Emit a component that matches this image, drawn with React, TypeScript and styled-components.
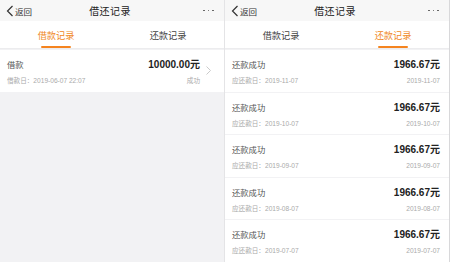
import React from "react";
import styled, { createGlobalStyle } from "styled-components";

const GlobalStyle = createGlobalStyle`
  html, body {
    margin: 0;
    padding: 0;
    background: #f2f2f4;
  }
  body {
    font-family: "Liberation Sans", "Noto Sans CJK SC", sans-serif;
  }
`;

const Page = styled.div`
  display: flex;
  width: 450px;
  height: 262px;
  overflow: hidden;
  gap: 1px;
  background: #e4e4e6;
`;

const Screen = styled.div<{ $edge?: boolean }>`
  display: flex;
  flex-direction: column;
  width: 224px;
  background: #f2f2f4;
  border-right: ${(p) => (p.$edge ? "1px solid #d8d8da" : "none")};
`;

const NavBar = styled.div`
  display: grid;
  grid-template-columns: 1fr auto 1fr;
  align-items: center;
  height: 21px;
  padding: 0 10px 0 6px;
  background: #f7f7f7;
`;

const Back = styled.div`
  display: flex;
  align-items: center;
  gap: 1px;
  font-size: 8.5px;
  color: #333;
`;

const Title = styled.div`
  font-size: 10px;
  color: #222;
  letter-spacing: 0.4px;
`;

const More = styled.div`
  justify-self: end;
  display: flex;
  gap: 3px;
`;

const Dot = styled.span`
  width: 1.6px;
  height: 1.6px;
  border-radius: 50%;
  background: #555;
`;

const Tabs = styled.div`
  display: flex;
  height: 27px;
  background: #fff;
  border-bottom: 1px solid #ececee;
`;

const Tab = styled.div<{ $active?: boolean }>`
  position: relative;
  flex: 1;
  display: flex;
  align-items: center;
  justify-content: center;
  font-size: 9.2px;
  color: ${(p) => (p.$active ? "#f0891e" : "#444")};
  &::after {
    content: "";
    display: ${(p) => (p.$active ? "block" : "none")};
    position: absolute;
    bottom: 0;
    left: 50%;
    width: 30px;
    height: 2px;
    margin-left: -15px;
    border-radius: 1px;
    background: #f5841f;
  }
`;

const List = styled.div`
  display: flex;
  flex-direction: column;
  gap: 1px;
  margin-top: 1px;
`;

const Row = styled.div`
  display: flex;
  align-items: center;
  height: 41.5px;
  padding: 0 9px 0 7px;
  background: #fff;
`;

const Info = styled.div`
  flex: 1;
  display: flex;
  flex-direction: column;
  gap: 4px;
`;

const Line = styled.div`
  display: flex;
  justify-content: space-between;
  align-items: baseline;
`;

const Label = styled.span`
  font-size: 8.3px;
  color: #555;
`;

const Amount = styled.span`
  font-size: 10px;
  font-weight: bold;
  color: #222;
`;

const Sub = styled.span`
  font-size: 6.6px;
  color: #aaa;
`;

const Chevron = styled.div`
  width: 10px;
  margin-left: 3px;
  margin-right: 2px;
  display: flex;
  justify-content: center;
`;

const BackIcon = () => (
  <svg width="8" height="12" viewBox="0 0 8 12">
    <path d="M6.5 1 L1.5 6 L6.5 11" fill="none" stroke="#333" strokeWidth="1.2" />
  </svg>
);

const ChevronIcon = () => (
  <svg width="5" height="9" viewBox="0 0 5 9">
    <path d="M0.5 0.5 L4.5 4.5 L0.5 8.5" fill="none" stroke="#c4c4c4" strokeWidth="0.9" />
  </svg>
);

const Header = ({ active }: { active: number }) => (
  <>
    <NavBar>
      <Back>
        <BackIcon />
        返回
      </Back>
      <Title>借还记录</Title>
      <More>
        <Dot />
        <Dot />
        <Dot />
      </More>
    </NavBar>
    <Tabs>
      <Tab $active={active === 0}>借款记录</Tab>
      <Tab $active={active === 1}>还款记录</Tab>
    </Tabs>
  </>
);

const repayDates = ["2019-11-07", "2019-10-07", "2019-09-07", "2019-08-07", "2019-07-07"];

export default function App() {
  return (
    <>
      <GlobalStyle />
      <Page>
        <Screen>
          <Header active={0} />
          <List>
            <Row>
              <Info>
                <Line>
                  <Label>借款</Label>
                  <Amount>10000.00元</Amount>
                </Line>
                <Line>
                  <Sub>借款日：2019-06-07 22:07</Sub>
                  <Sub>成功</Sub>
                </Line>
              </Info>
              <Chevron>
                <ChevronIcon />
              </Chevron>
            </Row>
          </List>
        </Screen>
        <Screen $edge>
          <Header active={1} />
          <List>
            {repayDates.map((d) => (
              <Row key={d}>
                <Info>
                  <Line>
                    <Label>还款成功</Label>
                    <Amount>1966.67元</Amount>
                  </Line>
                  <Line>
                    <Sub>应还款日：{d}</Sub>
                    <Sub>{d}</Sub>
                  </Line>
                </Info>
              </Row>
            ))}
          </List>
        </Screen>
      </Page>
    </>
  );
}
